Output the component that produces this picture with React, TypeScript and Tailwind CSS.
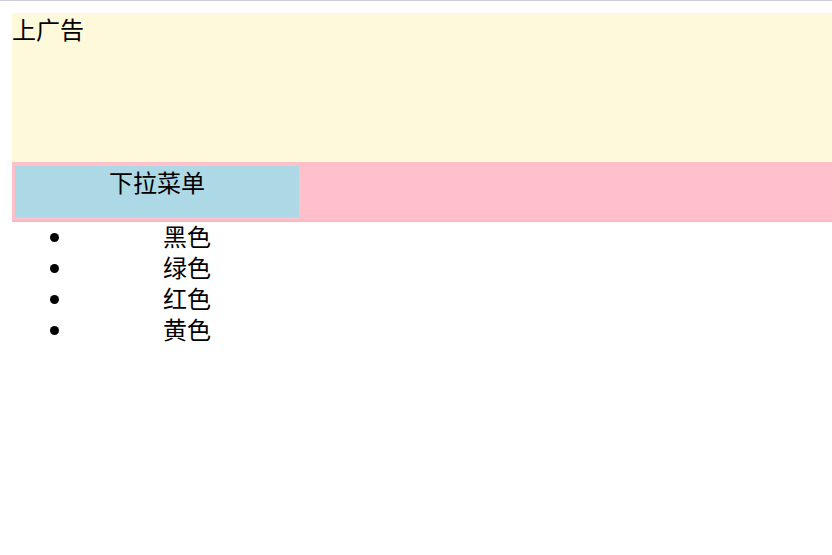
export default function App() {
  const colors = ['黑色', '绿色', '红色', '黄色'];

  return (
    <div
      className="min-h-screen bg-white border-t border-[#cdcdd9] pl-3 pt-3 text-black text-[24px] leading-[31px]"
      style={{ fontFamily: '"Microsoft YaHei", "Noto Sans CJK SC", sans-serif' }}
    >
      {/* top ad */}
      <div className="h-[149px] bg-[#fff9dc]">上广告</div>

      {/* dropdown bar */}
      <div className="h-[60px] bg-[#ffc0cb] border-b-2 border-[#f9b8c4] pt-[4px] pl-[3px]">
        <div className="w-[284px] h-[51px] bg-[#add8e6] text-center">下拉菜单</div>
      </div>

      <ul className="list-disc pl-[63px] -mt-[2px]">
        {colors.map((c) => (
          <li key={c} className="w-[224px] text-center">
            {c}
          </li>
        ))}
      </ul>
    </div>
  );
}
